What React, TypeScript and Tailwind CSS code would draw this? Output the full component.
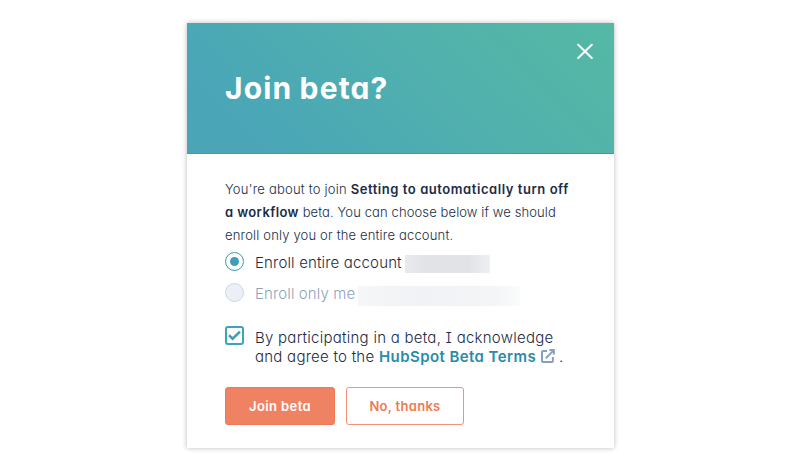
import React from "react";

function CloseIcon() {
  return (
    <svg width="16" height="16" viewBox="0 0 16 16" fill="none" stroke="#fff" strokeWidth="2" strokeLinecap="round">
      <path d="M1.2 1.7 14.8 15M14.8 1.7 1.2 15" />
    </svg>
  );
}

function ExternalIcon() {
  return (
    <svg width="14" height="14" viewBox="0 0 14 14" fill="none" stroke="#8a9fc0" strokeWidth="2" strokeLinejoin="round" strokeLinecap="butt">
      <path d="M6 2.1H1.9a.9.9 0 0 0-.9.9v9.1a.9.9 0 0 0 .9.9H11a.9.9 0 0 0 .9-.9V8" />
      <path d="M4.8 9.2 12.4 1.6M8.4 1.1h4.5v4.5" />
    </svg>
  );
}

export default function App() {
  return (
    <div className="h-[470px] w-[800px] overflow-hidden bg-white pl-[187px] pt-[23px] font-['Inter',sans-serif] [font-feature-settings:'cv11','cv08']">
      <section className="h-[425px] w-[427px] bg-white shadow-[0_0_5px_rgba(0,0,0,0.28)]">
        <header className="flex h-[131px] items-start justify-between border-b border-[#20a8b0] bg-[linear-gradient(45deg,#4aa5b8_0%,#4aa7b6_20%,#51b1ad_60%,#54b9a4_100%)] pl-[38px] pr-[21px]">
          <h1 className="mt-[45px] whitespace-nowrap text-[30px] font-bold leading-[40px] tracking-[1.15px] [word-spacing:-1px] text-white">Join beta?</h1>
          <button aria-label="Close" className="mt-[20px]"><CloseIcon /></button>
        </header>
        <div className="pl-[38px] pt-[24px] text-[#1a2c45]">
          <div className="whitespace-nowrap text-[13px] font-light leading-[23px]">
            <p><span className="tracking-[0.21px]">You're about to join </span><b className="font-semibold tracking-[0.56px]">Setting to automatically turn off</b></p>
            <p><b className="font-semibold tracking-[0.4px]">a workflow</b><span className="tracking-[0.11px]"> beta. You can choose below if we should</span></p>
            <p className="tracking-[0.17px]">enroll only you or the entire account.</p>
          </div>
          <div className="mt-[5px] flex h-[19px] items-center whitespace-nowrap text-[15px] font-light">
            <span className="flex size-[19px] items-center justify-center rounded-full border border-[#2f9fb8]"><span className="size-[9px] rounded-full bg-[#3f9db6]" /></span>
            <span className="ml-[11px] mt-[3px] w-[150px] tracking-[0.16px]">Enroll entire account</span>
            <span className="mt-[5px] h-[18px] w-[85px] bg-[linear-gradient(90deg,#e9eaed,#e1e3e7_25%,#e2e3e7_75%,#eff0f2)]" />
          </div>
          <div className="mt-[12px] flex h-[19px] items-center whitespace-nowrap text-[15px] font-light text-[#8fa3bb]">
            <span className="size-[19px] rounded-full border border-[#cbd6e2] bg-[#eaf0f6]" />
            <span className="ml-[11px] mt-[3px] w-[103px] tracking-[0.12px]">Enroll only me</span>
            <span className="mt-[6px] h-[20px] w-[162px] bg-[linear-gradient(90deg,#f4f6f8,#f0f2f5_40%,#f3f5f7_85%,#fafbfb)]" />
          </div>
          <div className="mt-[24px] flex whitespace-nowrap text-[15px] font-light leading-[19px]">
            <span className="flex size-[19px] items-center justify-center rounded-[3px] border-2 border-[#3ba3ba]">
              <svg width="13" height="11" viewBox="0 0 13 11" fill="none" stroke="#3f9db6" strokeWidth="2.6"><path d="m1 5.3 3.6 3.3L12 1.6" /></svg>
            </span>
            <div className="ml-[11px] mt-[2px]">
              <p className="tracking-[0.26px]">By participating in a beta, I acknowledge</p>
              <p className="flex"><span className="w-[124px] tracking-[0.25px]">and agree to the</span><a className="w-[162px] font-semibold tracking-[0.42px] text-[#2a8ba6]">HubSpot Beta Terms</a><span className="mt-[2px]"><ExternalIcon /></span><span className="ml-[4px]">.</span></p>
            </div>
          </div>
          <div className="mt-[21px] flex gap-[11px] whitespace-nowrap text-[13px] font-semibold">
            <button className="h-[38px] w-[110px] rounded-[3px] border border-[#f07852] bg-[#f08264] pt-[2px] tracking-[0.4px] text-white">Join beta</button>
            <button className="h-[38px] w-[118px] rounded-[3px] border border-[#f59078] bg-white pt-[2px] tracking-[0.3px] text-[#f07a50]">No, thanks</button>
          </div>
        </div>
      </section>
    </div>
  );
}
